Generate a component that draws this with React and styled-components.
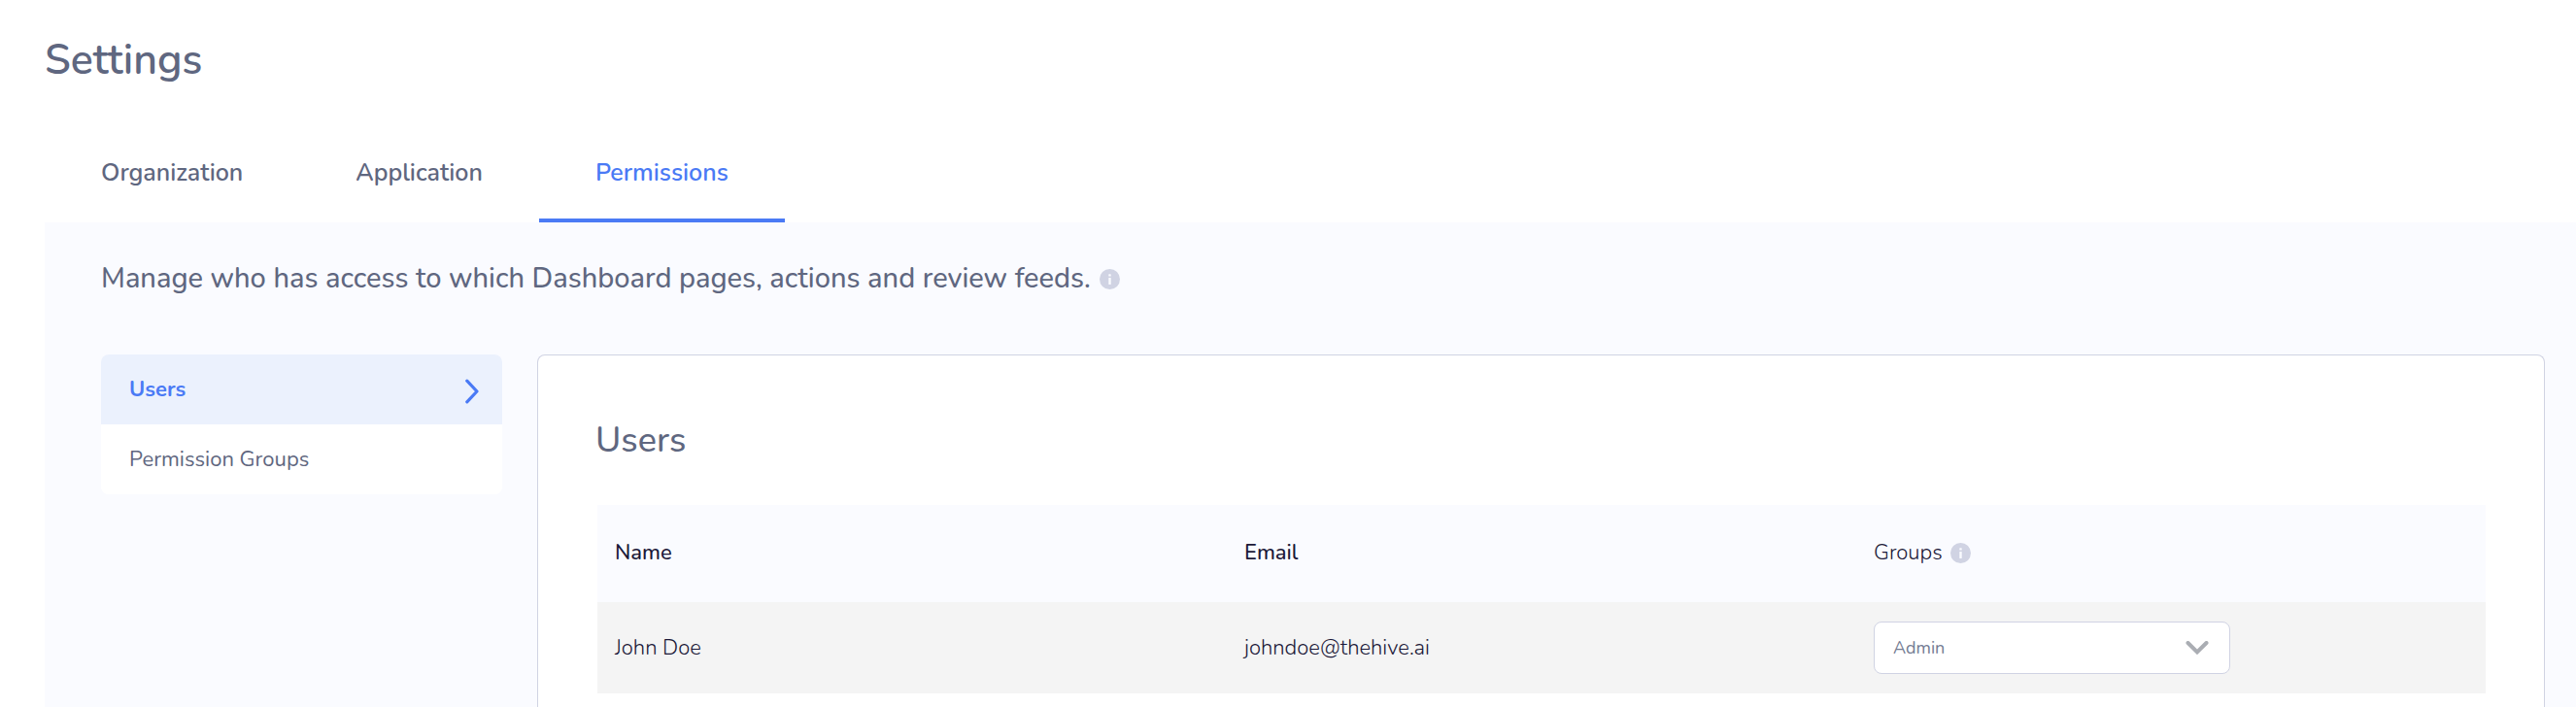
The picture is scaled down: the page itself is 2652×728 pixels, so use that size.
import { useState } from "react";
import styled, { createGlobalStyle } from "styled-components";

const tabs = ["Organization", "Application", "Permissions"];
const sections = ["Users", "Permission Groups"];
const users = [{ name: "John Doe", email: "johndoe@thehive.ai", group: "Admin" }];
const groups = ["Admin", "Moderator", "Viewer"];

const InfoIcon = () => (
	<svg width="21" height="21" viewBox="0 0 21 21" aria-hidden="true">
		<circle cx="10.5" cy="10.5" r="10.5" fill="#d0d3e3" />
		<rect x="9.3" y="5.2" width="2.4" height="2.4" rx="0.6" fill="#fafbff" />
		<rect x="9.3" y="9" width="2.4" height="7" rx="0.6" fill="#fafbff" />
	</svg>
);

const ChevronRight = () => (
	<svg width="14" height="26" viewBox="0 0 14 26" fill="none" aria-hidden="true">
		<path d="M1.8 2.2L12 13L1.8 23.8" stroke="#4a7af5" strokeWidth="3.2" strokeLinecap="round" strokeLinejoin="round" />
	</svg>
);

const ChevronDown = () => (
	<svg width="24" height="14" viewBox="0 0 24 14" fill="none" aria-hidden="true">
		<path d="M2.5 2L12 11.4L21.5 2" stroke="#aaadb3" strokeWidth="4" strokeLinecap="round" />
	</svg>
);

export default function App() {
	const [tab, setTab] = useState("Permissions");
	const [section, setSection] = useState("Users");

	return (
		<Container>
			<GlobalStyle />
			<Title>Settings</Title>
			<Tabs>
				{tabs.map((e) => (
					<Tab key={e} type="button" $active={e === tab} onClick={() => setTab(e)}>
						{e}
					</Tab>
				))}
			</Tabs>
			<Content>
				<Description>
					Manage who has access to which Dashboard pages, actions and review feeds.
					<InfoIcon />
				</Description>
				<Body>
					<Sidebar>
						{sections.map((e) => (
							<SidebarItem key={e} type="button" $active={e === section} onClick={() => setSection(e)}>
								{e}
								{e === section && <ChevronRight />}
							</SidebarItem>
						))}
					</Sidebar>
					<Card>
						<CardTitle>Users</CardTitle>
						<TableWrapper>
							<Table>
								<thead>
									<tr>
										<HeadCell>Name</HeadCell>
										<HeadCell>Email</HeadCell>
										<HeadCell $light>
											<HeadLabel>
												Groups
												<InfoIcon />
											</HeadLabel>
										</HeadCell>
									</tr>
								</thead>
								<tbody>
									{users.map((user) => (
										<tr key={user.email}>
											<Cell>{user.name}</Cell>
											<Cell>{user.email}</Cell>
											<Cell>
												<SelectWrapper>
													<Select aria-label="Groups" defaultValue={user.group}>
														{groups.map((e) => (
															<option key={e}>{e}</option>
														))}
													</Select>
													<ChevronDown />
												</SelectWrapper>
											</Cell>
										</tr>
									))}
								</tbody>
							</Table>
						</TableWrapper>
					</Card>
				</Body>
			</Content>
		</Container>
	);
}

const GlobalStyle = createGlobalStyle`
	* {
		box-sizing: border-box;
	}

	body {
		background: #ffffff;
		color: #5f6780;
		font-family: Nunito, Lato, sans-serif;
		margin: 0;
	}

	button,
	select {
		font-family: inherit;
	}
`;

const Container = styled.div`
	display: flex;
	flex-direction: column;
	min-height: 100vh;
	padding-left: 46px;
`;

const Title = styled.h1`
	font-size: 43px;
	font-weight: 600;
	line-height: 60px;
	margin: 0;
	padding: 32px 0 34px;
`;

const Tabs = styled.nav`
	display: flex;
`;

const Tab = styled.button`
	background: none;
	border: none;
	border-bottom: 4px solid ${(p) => (p.$active ? "#4a7af5" : "transparent")};
	color: ${(p) => (p.$active ? "#4a7af5" : "#5f6780")};
	cursor: pointer;
	font-size: 25px;
	font-weight: 600;
	line-height: 36px;
	padding: 34px 58px 29px;
`;

const Content = styled.main`
	background: #fafbff;
	flex: 1;
	padding: 37px 32px 0 58px;
`;

const Description = styled.p`
	align-items: center;
	display: flex;
	font-size: 29px;
	font-weight: 500;
	gap: 9px;
	line-height: 42px;
	margin: 0 0 57px;
`;

const Body = styled.div`
	align-items: flex-start;
	display: flex;
	gap: 36px;
`;

const Sidebar = styled.aside`
	background: #ffffff;
	border-radius: 8px;
	flex: 0 0 413px;
	overflow: hidden;
`;

const SidebarItem = styled.button`
	align-items: center;
	background: ${(p) => (p.$active ? "#ebf1fd" : "#ffffff")};
	border: none;
	color: ${(p) => (p.$active ? "#4a7af5" : "#5f6780")};
	cursor: pointer;
	display: flex;
	font-size: 22px;
	font-weight: ${(p) => (p.$active ? 700 : 400)};
	height: 72px;
	justify-content: space-between;
	padding: 0 24px 0 29px;
	width: 100%;

	svg {
		margin-top: 4px;
	}
`;

const Card = styled.section`
	background: #ffffff;
	border: 1px solid #d0d3e3;
	border-bottom: none;
	border-radius: 8px 8px 0 0;
	flex: 1;
	min-height: 363px;
	padding: 61px 60px 0 59px;
`;

const CardTitle = styled.h2`
	font-size: 36px;
	font-weight: 500;
	line-height: 54px;
	margin: 0 0 39px;
`;

const TableWrapper = styled.div`
	padding-left: 2px;
`;

const Table = styled.table`
	border-collapse: collapse;
	color: #1b1838;
	font-size: 22px;
	table-layout: fixed;
	width: 100%;
`;

const HeadCell = styled.th`
	background: #fafbff;
	font-weight: ${(p) => (p.$light ? 300 : 500)};
	height: 100px;
	padding: 0 18px 2px;
	text-align: left;
`;

const HeadLabel = styled.span`
	align-items: center;
	display: flex;
	gap: 8px;
`;

const Cell = styled.td`
	background: #f4f4f4;
	font-weight: 300;
	height: 94px;
	padding: 0 18px;
`;

const SelectWrapper = styled.div`
	align-items: center;
	background: #ffffff;
	border: 1px solid #d0d3e3;
	border-radius: 8px;
	display: grid;
	height: 54px;
	max-width: 367px;

	select,
	svg {
		grid-area: 1 / 1;
	}

	svg {
		justify-self: end;
		margin-right: 21px;
		pointer-events: none;
	}
`;

const Select = styled.select`
	appearance: none;
	background: none;
	border: none;
	color: #737b92;
	font-size: 18px;
	font-weight: 400;
	height: 100%;
	padding: 0 52px 0 19px;
	width: 100%;
`;
